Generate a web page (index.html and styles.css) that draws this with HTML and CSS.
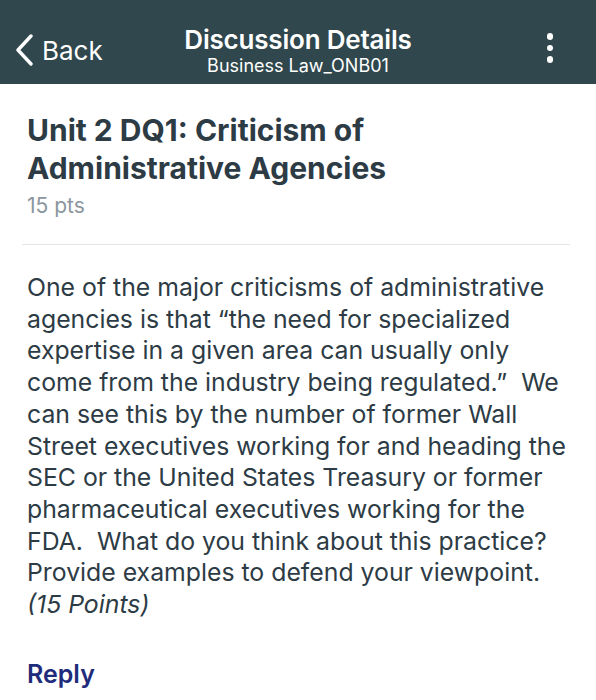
FILE: index.html
```html
<!DOCTYPE html>
<html lang="en">
<head>
<meta charset="utf-8">
<title>Discussion Details</title>
<link rel="stylesheet" href="styles.css">
</head>
<body>
<header class="navbar">
  <a class="back" href="#">
    <svg class="chevron" width="20" height="32" viewBox="0 0 20 32" aria-hidden="true">
      <path d="M17 2 L4 16 L17 30" fill="none" stroke="#fff" stroke-width="3.4" stroke-linecap="round" stroke-linejoin="round"/>
    </svg>
    <span>Back</span>
  </a>
  <div class="nav-title">
    <div class="nav-main">Discussion Details</div>
    <div class="nav-sub">Business Law_ONB01</div>
  </div>
  <div class="more" aria-label="More">
    <span class="dot"></span><span class="dot"></span><span class="dot"></span>
  </div>
</header>
<main class="content">
  <h1 class="title">Unit 2 DQ1: Criticism of Administrative Agencies</h1>
  <div class="pts">15 pts</div>
  <hr class="divider">
  <p class="body-text">One of the major criticisms of administrative agencies is that “the need for specialized expertise in a given area can usually only come from the industry being regulated.”&nbsp; We can see this by the number of former Wall Street executives working for and heading the SEC or the United States Treasury or former pharmaceutical executives working for the FDA.&nbsp; What do you think about this practice? Provide examples to defend your viewpoint. <em>(15 Points)</em></p>
  <a class="reply" href="#">Reply</a>
</main>
</body>
</html>
```
FILE: styles.css
```css
html, body {
  margin: 0;
  padding: 0;
  background: #ffffff;
}
body {
  font-family: Inter, Roboto, "Noto Sans", sans-serif;
  color: #2d3b45;
}
.navbar {
  height: 84px;
  background: #2f474d;
  color: #ffffff;
  display: flex;
  align-items: center;
  justify-content: space-between;
  padding: 18px 14px 0 14px;
  box-sizing: border-box;
}
.back {
  display: flex;
  align-items: center;
  gap: 8px;
  color: #ffffff;
  text-decoration: none;
  font-size: 26px;
  width: 120px;
  margin-top: -2px;
}
.chevron {
  display: block;
}
.nav-title {
  flex: 1;
  text-align: center;
}
.nav-main {
  font-size: 26px;
  font-weight: 600;
  line-height: 30px;
  letter-spacing: -0.2px;
}
.nav-sub {
  font-size: 18px;
  line-height: 22px;
}
.more {
  width: 120px;
  display: flex;
  flex-direction: column;
  align-items: flex-end;
  gap: 5px;
  padding-right: 29px;
  box-sizing: border-box;
  margin-top: -6px;
}
.dot {
  width: 6.5px;
  height: 6.5px;
  border-radius: 50%;
  background: #ffffff;
}
.content {
  padding: 27px 24px 0 27px;
}
.title {
  margin: 0;
  font-size: 30px;
  line-height: 38px;
  font-weight: 700;
  color: #2d3b45;
  letter-spacing: 0;
  padding-right: 150px;
}
.pts {
  font-size: 21px;
  color: #8b969e;
  margin-top: 6px;
  line-height: 26px;
}
.divider {
  border: 0;
  border-top: 1px solid #e3e6e8;
  margin: 25px 2px 0 -5px;
}
.body-text {
  margin: 27px 0 0 0;
  font-size: 24.8px;
  line-height: 31.7px;
  color: #2d3b45;
}
.body-text em {
  font-style: italic;
}
.reply {
  display: block;
  margin-top: 38px;
  font-size: 25px;
  line-height: 30px;
  font-weight: 600;
  color: #1f2b7b;
  text-decoration: none;
}
```
